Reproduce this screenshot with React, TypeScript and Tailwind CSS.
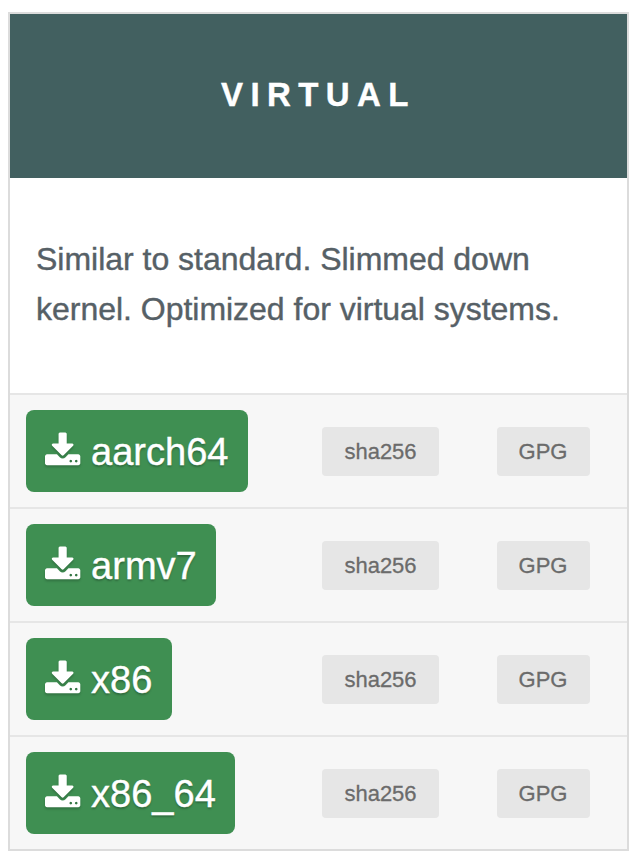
const builds = ["aarch64", "armv7", "x86", "x86_64"];

function DownloadIcon() {
  return (
    <svg
      viewBox="64 0 1664 1536"
      fill="currentColor"
      className="mr-[10.5px] h-[32.6px] w-[35.3px] shrink-0 -translate-y-[2.4px] overflow-visible drop-shadow-[0_2px_1px_rgba(0,0,0,0.2)]"
    >
      <path d="M1344 1344q0-26-19-45t-45-19-45 19-19 45 19 45 45 19 45-19 19-45zm256 0q0-26-19-45t-45-19-45 19-19 45 19 45 45 19 45-19 19-45zm128-224v320q0 40-28 68t-68 28h-1472q-40 0-68-28t-28-68v-320q0-40 28-68t68-28h465l135 136q58 56 136 56t136-56l136-136h464q40 0 68 28t28 68zm-325-569q17 41-14 70l-448 448q-18 19-45 19t-45-19l-448-448q-31-29-14-70 17-39 59-39h256v-448q0-26 19-45t45-19h256q26 0 45 19t19 45v448h256q42 0 59 39z" />
    </svg>
  );
}

function BuildRow({ name }: { name: string }) {
  return (
    <div className="grid h-[114px] grid-cols-[296px_175px_1fr] items-center border-t-2 border-[#e6e6e6] bg-[#f7f7f7] pl-4">
      <a className="flex h-[82px] items-center justify-self-start rounded-lg bg-[#3f8f52] px-[19.3px] text-[38px] leading-none text-white [text-shadow:0_2px_2px_rgba(0,0,0,0.25)] [-webkit-text-stroke:0.4px_white]">
        <DownloadIcon />
        <span className="pt-[2px]">{name}</span>
      </a>
      <a className="flex h-[49px] w-[117px] items-center justify-center rounded bg-[#e6e6e6] pt-[2px] text-[22px] leading-none text-[#6b6b6b] [-webkit-text-stroke:0.3px_#6b6b6b]">
        sha256
      </a>
      <a className="flex h-[49px] w-[93px] items-center justify-center rounded bg-[#e6e6e6] pt-[2px] pr-px text-[22px] leading-none text-[#6b6b6b] [-webkit-text-stroke:0.3px_#6b6b6b]">
        GPG
      </a>
    </div>
  );
}

export default function App() {
  return (
    <main className="h-[864px] w-[638px] bg-white pt-3 pl-2 font-['Liberation_Sans',Arial,sans-serif]">
      <section className="w-[621px] border-2 border-[#dcdcdc]">
        <h2 className="flex h-[164px] items-center justify-center bg-[#426060] pb-[4px] text-[33px] leading-none font-bold tracking-[7.4px] text-white [-webkit-text-stroke:0.4px_white]">
          VIRTUAL
        </h2>
        <div className="h-[215px] px-[26px] pt-14 text-[32px] leading-[50px] tracking-[-0.02px] text-[#566066] [-webkit-text-stroke:0.4px_#566066]">
          <p>
            Similar to standard. Slimmed down
            <br />
            kernel. Optimized for virtual systems.
          </p>
        </div>
        {builds.map((name) => (
          <BuildRow key={name} name={name} />
        ))}
      </section>
    </main>
  );
}
